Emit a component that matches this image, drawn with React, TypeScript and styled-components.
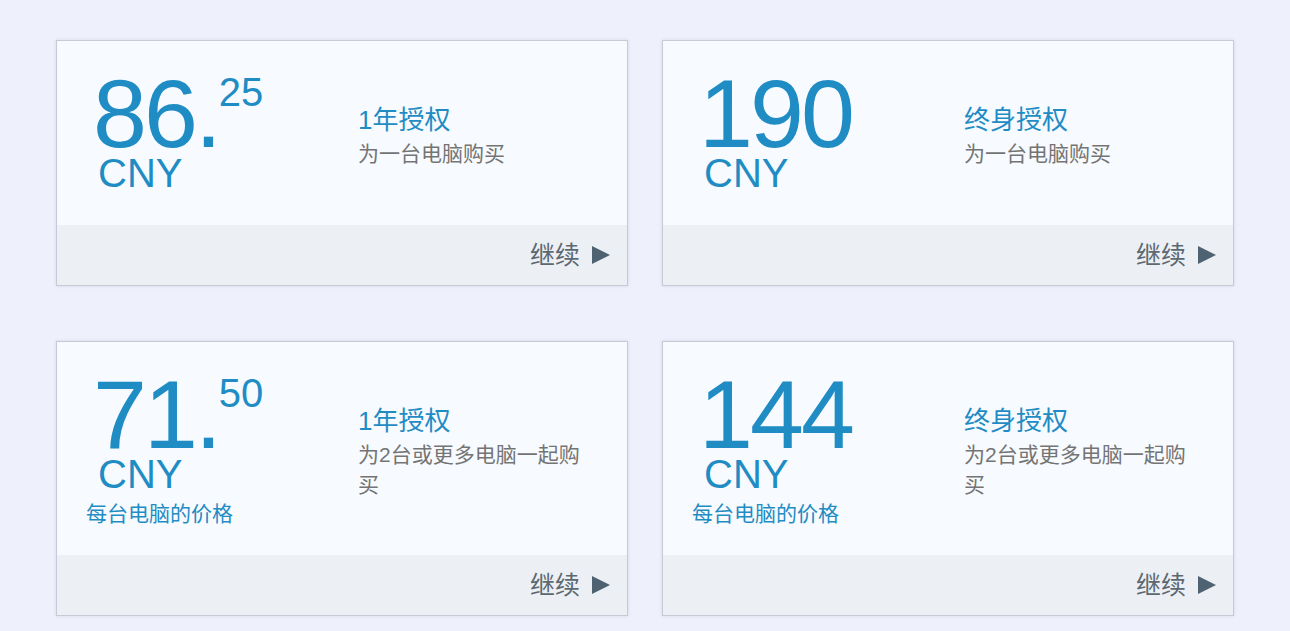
import React from "react";
import styled, { createGlobalStyle } from "styled-components";

interface PlanProps {
  whole: string;
  cents?: string;
  title: string;
  desc: string;
  perPc?: boolean;
}

const plans: PlanProps[] = [
  { whole: "86.", cents: "25", title: "1年授权", desc: "为一台电脑购买" },
  { whole: "190", title: "终身授权", desc: "为一台电脑购买" },
  { whole: "71.", cents: "50", title: "1年授权", desc: "为2台或更多电脑一起购买", perPc: true },
  { whole: "144", title: "终身授权", desc: "为2台或更多电脑一起购买", perPc: true },
];

const PlanCard: React.FC<PlanProps> = ({ whole, cents, title, desc, perPc }) => {
  return (
    <Card>
      <CardBody>
        <PriceCol>
          <NumberRow>
            <Whole>{whole}</Whole>
            {cents && <Cents>{cents}</Cents>}
          </NumberRow>
          <Currency>CNY</Currency>
          {perPc && <PerPc>每台电脑的价格</PerPc>}
        </PriceCol>
        <InfoCol>
          <Title>{title}</Title>
          <Desc>{desc}</Desc>
        </InfoCol>
      </CardBody>
      <CardFooter>
        <FooterLabel>继续</FooterLabel>
        <svg width="18" height="18" viewBox="0 0 18 18">
          <polygon points="0,0 18,9 0,18" fill="#4f6272" />
        </svg>
      </CardFooter>
    </Card>
  );
};

const App: React.FC = () => {
  return (
    <>
      <GlobalStyle />
      <Page>
        {plans.map((p, i) => (
          <PlanCard key={i} {...p} />
        ))}
      </Page>
    </>
  );
};

const GlobalStyle = createGlobalStyle`
  html, body {
    margin: 0;
    padding: 0;
    background: #eef0fc;
  }
  body {
    font-family: "Liberation Sans", "Noto Sans CJK SC", sans-serif;
  }
`;

const Page = styled.div`
  display: grid;
  grid-template-columns: 572px 572px;
  column-gap: 34px;
  row-gap: 55px;
  align-items: start;
  padding: 40px 56px;
  min-height: 631px;
  box-sizing: border-box;
`;

const Card = styled.div`
  background: #f7fbff;
  border: 1px solid #c8c9d5;
  box-shadow: 0 0 3px rgba(90, 90, 120, 0.18);
  display: flex;
  flex-direction: column;
`;

const CardBody = styled.div`
  display: flex;
  padding-bottom: 38px;
`;

const PriceCol = styled.div`
  flex: 0 0 301px;
  box-sizing: border-box;
  padding: 28px 0 0 29px;
  display: flex;
  flex-direction: column;
  color: #1f8cc4;
`;

const NumberRow = styled.div`
  display: flex;
  align-items: flex-start;
  padding-left: 7px;
`;

const Whole = styled.span`
  font-size: 97px;
  line-height: 90px;
  letter-spacing: -3px;
`;

const Cents = styled.span`
  font-size: 40px;
  line-height: 40px;
  margin-top: 3px;
`;

const Currency = styled.div`
  font-size: 40px;
  line-height: 28px;
  padding-left: 12px;
`;

const PerPc = styled.div`
  font-family: "Noto Sans CJK SC", sans-serif;
  font-size: 21px;
  line-height: 24px;
  margin: 12px 0 -7px;
`;

const InfoCol = styled.div`
  width: 222px;
  padding-top: 64px;
`;

const Title = styled.div`
  font-size: 26px;
  line-height: 30px;
  color: #1f8cc4;
`;

const Desc = styled.div`
  font-size: 21px;
  line-height: 30px;
  margin-top: 4px;
  color: #747474;
`;

const CardFooter = styled.div`
  height: 60px;
  background: #ecf0f4;
  display: flex;
  justify-content: flex-end;
  align-items: center;
  gap: 12px;
  padding-right: 17px;
  font-family: "Noto Sans CJK SC", sans-serif;
  font-size: 25px;
  color: #5c6872;
`;

const FooterLabel = styled.span`
  line-height: 30px;
  margin-bottom: 4px;
`;

export default App;
